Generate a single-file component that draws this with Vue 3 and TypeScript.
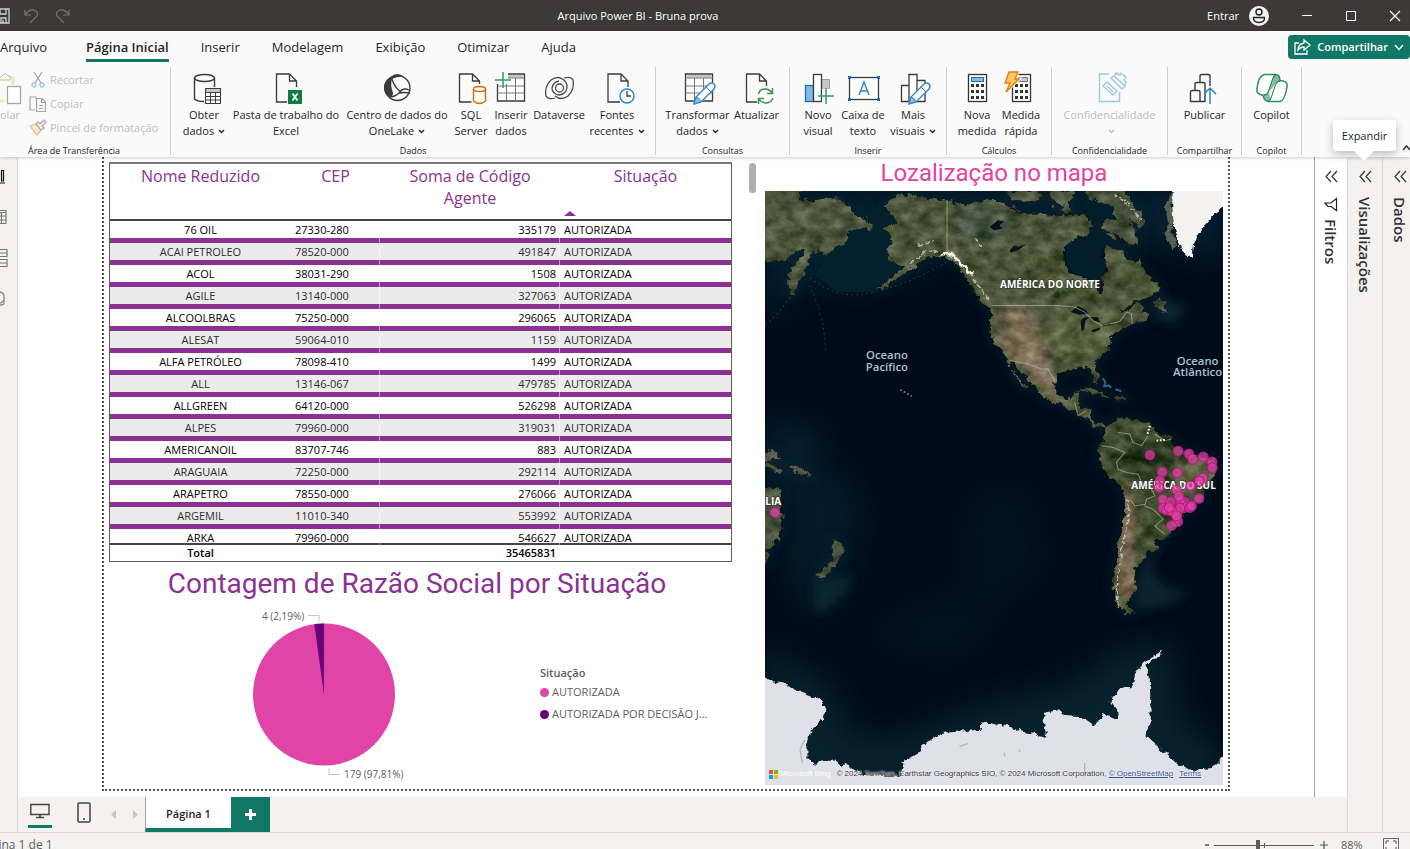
<script setup lang="ts">
import { ref } from 'vue'

interface RibbonButton { icon: string; lines: string[]; width: number; menu?: boolean; disabled?: boolean }
interface RibbonGroup { label: string; width: number; buttons: RibbonButton[] }

const tabs = ['Arquivo', 'Página Inicial', 'Inserir', 'Modelagem', 'Exibição', 'Otimizar', 'Ajuda']
const activeTab = ref('Página Inicial')
const zoom = ref(44)

const doc = (x: number) =>
  `<path d="M${x + 12} 29H${x}V1H${x + 13}L${x + 20} 8V14M${x + 13} 1V8H${x + 20}" fill="none" stroke="#3b3a39" stroke-width="1.3"/>`
const pencil =
  '<path d="M12 31 14 24 27 11Q30 9 32 11Q34 13 32 16L19 29Z" fill="#fff" stroke="#2e86c9" stroke-width="1.4"/><path d="M12 31 14 24Q18 25 19 29Z" fill="#83bbe8" stroke="#2e86c9"/><path d="M24 14 29 19" stroke="#2e86c9"/>'
const keys = (x: number) => {
  let out = ''
  for (let r = 0; r < 3; r++) for (let c = 0; c < 3; c++) out += `<rect x="${x + c * 5}" y="${11 + r * 6}" width="3" height="3" fill="#333"/>`
  return out
}
const plus = (x: number, y: number) => `<path d="M${x - 8} ${y}H${x + 8}M${x} ${y - 8}V${y + 8}" stroke="#2f9e57" stroke-width="1.5"/>`
const cylinder = (x: number, y: number, w: number, h: number, c: string) =>
  `<path d="M${x} ${y}V${y + h}Q${x + w / 2} ${y + h + 5} ${x + w} ${y + h}V${y}" fill="#fff" stroke="${c}" stroke-width="1.4"/><ellipse cx="${x + w / 2}" cy="${y}" rx="${w / 2}" ry="2.5" fill="#fff" stroke="${c}" stroke-width="1.4"/>`
const grid = (x: number) =>
  `<path d="M${x} 1H${x + 27}V28H${x}Z" fill="#fff" stroke="#3b3a39" stroke-width="1.3"/><rect x="${x + 1}" y="2" width="25" height="3" fill="#c8c6c4"/><path d="M${x} 5H${x + 27}M${x} 13H${x + 27}M${x} 20H${x + 27}M${x + 9} 5V28M${x + 18} 5V28" stroke="#797775" fill="none"/>`

const icons: Record<string, string> = {
  database:
    '<path d="M6.500 5V26Q9 28.500 16 28.500M26.500 5V14" fill="none" stroke="#3b3a39" stroke-width="1.400"/><ellipse cx="16.500" cy="5" rx="10" ry="3.500" fill="none" stroke="#3b3a39" stroke-width="1.400"/><rect x="17.500" y="15.500" width="15" height="15" fill="#fff" stroke="#3b3a39"/><rect x="18" y="16" width="14" height="3" fill="#c8c6c4"/><path d="M17.500 19.500H32.500M17.500 23.500H32.500M17.500 27H32.500M22.500 19.500V30M27.500 19.500V30" stroke="#3b3a39"/>',
  excel:
    doc(6.5) +
    '<rect x="17" y="16" width="16" height="16" fill="#fafafa"/><rect x="18" y="17" width="14" height="14" fill="#107c41"/><path d="M22.500 20.500 27.500 27.500M27.500 20.500 22.500 27.500" stroke="#fff" stroke-width="1.800"/>',
  onelake:
    '<circle cx="16.500" cy="15" r="12.500" fill="#fafafa" stroke="#3b3a39" stroke-width="1.400"/><path d="M10 4Q16-2 23 4Q17 3 11 6Q9 12 12 20Q12 24 8 24Q2 20 3 12Q5 6 10 4Z" fill="#3b3a39"/><path d="M11 6Q13 14 20 19M8 24Q14 24 18 20Q22 14 28 17M18 20Q22 19 29 20" fill="none" stroke="#3b3a39" stroke-width="1.300"/>',
  sql: doc(4.5) + '<rect x="17" y="11" width="15" height="20" fill="#fafafa"/>' + cylinder(18.5, 16, 12, 12, '#d86b00'),
  enter: grid(2.5) + '<rect x="-1" y="-2" width="14" height="13" fill="#fafafa"/>' + plus(8, 7),
  dataverse:
    '<g fill="none" stroke="#4a4a48" stroke-width="1.300"><circle cx="16.500" cy="15" r="4"/><path d="M12 25Q5 27 3 23Q1 14 8 7Q15 2 21 7Q26 12 23 18Q20 22 15 22Q9 20 9 15Q10 9 16 8M21 5Q28 3 30 7Q32 16 25 23Q18 28 12 23"/></g>',
  recent:
    doc(7) + '<circle cx="26" cy="23" r="9" fill="#fafafa"/><circle cx="26" cy="23" r="7" fill="#fff" stroke="#2e86c9" stroke-width="1.500"/><path d="M26 18V23H30" fill="none" stroke="#3b3a39" stroke-width="1.300"/>',
  transform: grid(3.5) + '<g>' + pencil + '</g>',
  refresh:
    doc(5.5) +
    '<rect x="16" y="13" width="17" height="18" fill="#fafafa"/><path d="M17.500 21Q19 15.500 25 16Q29 16.500 31 20M31.500 15V20.500H26M32 25Q30 30 24.500 30Q20 29.500 18 26M17.500 31V25.500H23" fill="none" stroke="#3a9350" stroke-width="1.500"/>',
  visual:
    '<rect x="3.500" y="12.500" width="8" height="16" fill="#83bbe8" stroke="#1f6fb2" stroke-width="1.300"/><rect x="19.500" y="6.500" width="8" height="22" fill="#c8c6c4" stroke="#a19f9d"/><rect x="11.500" y="1.500" width="8" height="27" fill="#fff" stroke="#3b3a39" stroke-width="1.300"/><rect x="20" y="16" width="10" height="14" fill="#fafafa"/>' +
    plus(24, 23),
  textbox:
    '<rect x="2.500" y="4.500" width="29" height="22" fill="#fff" stroke="#3b3a39" stroke-width="1.300"/><path d="M1 3H4V6H1ZM30 3H33V6H30ZM1 25H4V28H1ZM30 25H33V28H30Z" fill="#0f78c4"/><path d="M12 22 17 9 22 22M14 18H20" fill="none" stroke="#2e86c9" stroke-width="1.500"/>',
  more:
    '<path d="M4.500 28.500V12.500H12V1.500H20V7.500H28V28.500ZM12 12V28M20 7V18" fill="#fff" stroke="#3b3a39" stroke-width="1.300"/>' + pencil,
  calc: '<rect x="7.500" y="1.500" width="18" height="27" fill="#fff" stroke="#333" stroke-width="1.300"/><rect x="10.500" y="4.500" width="12" height="4" fill="#83bbe8" stroke="#1f6fb2"/>' + keys(10),
  quick:
    '<rect x="7.500" y="1.500" width="18" height="27" fill="#fff" stroke="#333" stroke-width="1.300"/><rect x="12.500" y="4.500" width="10" height="4" fill="#c8c6c4" stroke="#797775"/>' +
    keys(10) +
    '<path d="M4-1H13L10 6H14L1 19 5 10H0Z" fill="#fcd34f" stroke="#fafafa" stroke-width="3"/><path d="M4-1H13L10 6H14L1 19 5 10H0Z" fill="#fbc75d" stroke="#e07b1a" stroke-width="1.300"/>',
  label:
    '<g fill="none" stroke="#9dc9e6" stroke-width="1.400"><path d="M15 1H5.500V28.500H25.500V19"/><path d="M9 13 13 9 23 18 19 22ZM13 13 19 19" /><path d="M17 5 20 3 31 13 28 16ZM20 3 22 0 26 2 27 0 32 4 30 7 32 9 31 13M22 5 29 11"/></g>',
  publish:
    '<g fill="none" stroke="#3b3a39" stroke-width="1.400"><path d="M1.500 28.500V19Q1.500 17.500 3 17.500H9Q11 17.500 11 19V28.500ZM6 17V11Q6 9.500 8 9.500H14Q16 9.500 16 11V28.500H11M11 9V3Q11 1.500 13 1.500H19Q21 1.500 21 3V13"/></g><path d="M21 31V15M15 21 21 15 27 21" fill="none" stroke="#2e86c9" stroke-width="1.500"/>',
  copilot:
    '<path d="M16 7Q18 1 21 1.500Q24 2 24 8L20 10 13 19Q15 28 12 28.500Q8 28 7 22Z" fill="#85bf9f"/><path d="M8 1.500H20Q17 3 15 10L12 19Q10 23 6 22Q0 21 1 16Q2 4 8 1.500ZM24 28.500H12Q15 27 17 20L20 11Q22 7 27 8Q32 9 31 14Q29 27 24 28.500ZM20 1.500Q24 2 24 8M12 28.500Q8 28 7 22" fill="none" stroke="#2f8f5b" stroke-width="1.500"/><path d="M8 3H17L12 18Q10 22 6 21Q2 20 2 16Q4 4 8 3ZM24 27H15L20 12Q22 8 27 9Q31 10 30 14Q28 26 24 27Z" fill="#fdfffe"/>',
}

const groups: RibbonGroup[] = [
  {
    label: 'Dados', width: 485,
    buttons: [
      { icon: 'database', lines: ['Obter', 'dados'], width: 52, menu: true },
      { icon: 'excel', lines: ['Pasta de trabalho do', 'Excel'], width: 112 },
      { icon: 'onelake', lines: ['Centro de dados do', 'OneLake'], width: 110, menu: true },
      { icon: 'sql', lines: ['SQL', 'Server'], width: 38 },
      { icon: 'enter', lines: ['Inserir', 'dados'], width: 42 },
      { icon: 'dataverse', lines: ['Dataverse'], width: 54 },
      { icon: 'recent', lines: ['Fontes', 'recentes'], width: 62, menu: true },
    ],
  },
  {
    label: 'Consultas', width: 134,
    buttons: [
      { icon: 'transform', lines: ['Transformar', 'dados'], width: 68, menu: true },
      { icon: 'refresh', lines: ['Atualizar'], width: 50 },
    ],
  },
  {
    label: 'Inserir', width: 157,
    buttons: [
      { icon: 'visual', lines: ['Novo', 'visual'], width: 40 },
      { icon: 'textbox', lines: ['Caixa de', 'texto'], width: 50 },
      { icon: 'more', lines: ['Mais', 'visuais'], width: 50, menu: true },
    ],
  },
  {
    label: 'Cálculos', width: 105,
    buttons: [
      { icon: 'calc', lines: ['Nova', 'medida'], width: 44 },
      { icon: 'quick', lines: ['Medida', 'rápida'], width: 44 },
    ],
  },
  { label: 'Confidencialidade', width: 116, buttons: [{ icon: 'label', lines: ['Confidencialidade', ''], width: 100, menu: true, disabled: true }] },
  { label: 'Compartilhar', width: 74, buttons: [{ icon: 'publish', lines: ['Publicar'], width: 60 }] },
  { label: 'Copilot', width: 60, buttons: [{ icon: 'copilot', lines: ['Copilot'], width: 50 }] },
]

const rows: [string, string, string][] = [
  ['76 OIL', '27330-280', '335179'],
  ['ACAI PETROLEO', '78520-000', '491847'],
  ['ACOL', '38031-290', '1508'],
  ['AGILE', '13140-000', '327063'],
  ['ALCOOLBRAS', '75250-000', '296065'],
  ['ALESAT', '59064-010', '1159'],
  ['ALFA PETRÓLEO', '78098-410', '1499'],
  ['ALL', '13146-067', '479785'],
  ['ALLGREEN', '64120-000', '526298'],
  ['ALPES', '79960-000', '319031'],
  ['AMERICANOIL', '83707-746', '883'],
  ['ARAGUAIA', '72250-000', '292114'],
  ['ARAPETRO', '78550-000', '276066'],
  ['ARGEMIL', '11010-340', '553992'],
  ['ARKA', '79960-000', '546627'],
]

const pins: [number, number][] = [
  [33, 980], [1155, 808], [1240, 796], [1272, 804], [1283, 820], [1315, 813], [1341, 828], [1342, 846], [1192, 859], [1237, 861],
  [1185, 885], [1277, 901], [1302, 938], [1194, 941], [1218, 948], [1258, 948], [1247, 945], [1195, 967], [1265, 963], [1275, 965],
  [1205, 973], [1229, 980], [1245, 967], [1239, 1007], [1220, 1019], [1314, 877], [1303, 886], [1183, 905], [1235, 912], [1242, 932],
  [1280, 960], [1220, 975], [1213, 965], [1235, 990],
]

const northAmerica =
  'M360 65 400 25 455 28 510 42 550 45 600 60 640 45 680 45 720 55 760 85 830 85 880 90 920 95 960 85 985 120 965 150 930 155 900 190 895 220 915 265 960 275 985 285 1005 325 1015 300 1008 275 1030 255 1018 215 1020 180 1060 185 1080 200 1090 225 1110 235 1125 220 1140 255 1165 285 1188 310 1175 325 1150 335 1120 350 1090 362 1065 380 1085 375 1120 355 1140 360 1130 375 1150 390 1145 405 1110 415 1060 440 1040 455 1035 490 1000 520 985 535 1000 565 1003 590 990 585 975 550 950 545 925 550 880 565 872 590 875 620 890 640 915 640 930 620 950 620 940 655 950 665 980 672 978 700 1000 715 1028 718 1020 730 985 720 960 695 930 675 880 655 830 635 815 605 775 570 745 530 735 538 750 560 785 602 775 605 745 560 725 515 700 490 678 450 675 405 680 370 650 350 625 310 600 270 575 235 540 215 505 215 470 230 440 250 380 292 330 320 420 245 400 235 370 215 365 190 385 170 370 150 358 125 395 115 380 90Z'
const southAmerica =
  'M1025 725 1060 695 1090 700 1140 705 1160 720 1180 745 1215 750 1228 780 1270 800 1310 810 1345 825 1358 850 1340 880 1320 910 1310 940 1290 965 1255 985 1245 1015 1220 1035 1205 1060 1175 1060 1180 1085 1165 1095 1140 1105 1135 1125 1112 1150 1108 1180 1112 1210 1095 1235 1090 1260 1112 1278 1085 1282 1060 1260 1045 1230 1042 1180 1055 1130 1062 1060 1080 980 1080 930 1060 895 1030 870 1003 820 1000 790 1015 765Z'
const siberia =
  'M-30-20 100-20 108 40 150 45 190 38 230 40 255 65 290 95 328 115 318 140 290 130 268 128 252 145 245 175 215 185 190 210 160 200 138 205 130 250 105 290 90 330 78 330 75 290 80 255 100 225 125 195 100 195 85 210 65 225 30 225-30 222Z'
const islands =
  'M725 17 820 17 840 40 800 48 770 50 740 42ZM740 60 775 55 790 75 760 82ZM850 17 930 17 925 45 895 60 865 45ZM810 58 850 52 865 72 830 80ZM885 70 905 55 925 75 905 88ZM960 10 1075 10 1110 60 1142 105 1120 125 1092 100 1118 150 1122 180 1095 178 1060 150 1010 132 1018 105 1055 100 1045 65 1000 45 970 40ZM1015 140 1045 145 1050 175 1025 165ZM1170 345 1188 335 1208 380 1185 378 1168 370ZM945 615 985 605 1035 632 1000 628 970 620ZM1050 630 1090 635 1085 645 1055 645ZM205 1060 243 1088 225 1125 190 1165 175 1175 155 1170 205 1115ZM-30 895 45 905 58 1010 40 1060 15 1090-30 1095ZM-30 790 40 800 50 820-30 828ZM60 835 110 850 155 872 130 870 85 855ZM3 825 60 855 40 860 3 840ZM-30 1105 14 1105 8 1140-30 1140Z'
const hudsonBay = 'M905 185 925 160 965 160 985 125 1000 150 1018 175 1012 215 1028 250 1000 280 975 280 935 268 908 240Z'
const arcticChannels = 'M960 55 1000 60 1040 75 1035 95 1005 95 985 125 970 90ZM990 125 1020 138 1050 165 1085 190 1105 225 1090 220 1070 195 1020 175 1000 155ZM740 50 810 52 850 45 870 75 830 85 770 82Z'
const antarctica =
  'M-30 1440 30 1490 60 1495 110 1515 160 1535 187 1568 178 1600 150 1620 130 1660 130 1710 150 1738 165 1725 210 1722 260 1745 300 1765 410 1765 420 1720 465 1700 470 1680 530 1640 650 1630 655 1608 730 1620 780 1635 845 1655 835 1580 880 1572 895 1585 950 1590 990 1618 1015 1582 1055 1600 1062 1580 1040 1550 1045 1525 1075 1505 1100 1510 1110 1470 1130 1430 1190 1395 1180 1410 1145 1435 1155 1480 1158 1600 1145 1650 1200 1700 1240 1735 1290 1750 1340 1745 1410 1680 1410 1860-30 1860Z'
const greenland = 'M1225-20 1410-20 1410 50 1345 90 1310 130 1285 170 1280 215 1262 210 1240 180 1228 130 1222 70Z'
</script>

<template>
  <div class="app">
    <header class="titlebar">
      <div class="quick">
        <button aria-label="Salvar"><svg width="14" height="16" viewBox="0 0 14 16"><path d="M-1 1H9V15H-1M0 1V6H6V1M1 15V10H6V15M3 12V15" fill="none" stroke="#d0d0d0" stroke-width="1.3" /></svg></button>
        <button aria-label="Desfazer"><svg width="16" height="16" viewBox="0 0 16 16"><path d="M1 2V7H7M1 7Q5 1 10 2Q15 4 13 8L6 15" fill="none" stroke="#767574" stroke-width="1.2" /></svg></button>
        <button aria-label="Refazer"><svg width="16" height="16" viewBox="0 0 16 16"><path d="M15 2V7H9M15 7Q11 1 6 2Q1 4 3 8L10 15" fill="none" stroke="#767574" stroke-width="1.2" /></svg></button>
      </div>
      <h1>Arquivo Power BI - Bruna prova</h1>
      <div class="window">
        <button class="signin">Entrar
          <svg width="20" height="20" viewBox="0 0 20 20"><circle cx="10" cy="10" r="10" fill="#f3f2f1" /><circle cx="10" cy="6" r="3" fill="none" stroke="#222" stroke-width="1.4" /><path d="M4.500 11.500H15.500Q16 16 10 16.500Q4 16 4.500 11.500Z" fill="none" stroke="#222" stroke-width="1.4" /></svg>
        </button>
        <button aria-label="Minimizar"><svg width="12" height="12" viewBox="0 0 12 12"><path d="M1 5.500H11" stroke="#fff" /></svg></button>
        <button aria-label="Maximizar"><svg width="12" height="12" viewBox="0 0 12 12"><path d="M1.500 1.500H10.500V10.500H1.500Z" fill="none" stroke="#fff" /></svg></button>
        <button aria-label="Fechar"><svg width="12" height="12" viewBox="0 0 12 12"><path d="M1 1 11 11M11 1 1 11" stroke="#fff" stroke-width="1.2" /></svg></button>
      </div>
    </header>

    <section class="ribbon">
      <nav class="tabs">
        <button v-for="t in tabs" :key="t" :class="{ active: t === activeTab }" @click="activeTab = t">{{ t }}</button>
        <button class="share">
          <svg width="17" height="16" viewBox="0 0 17 16"><path d="M5 4H1V15H13V11M10 1 16 6 10 11V8Q6 8 4 11Q4 5 10 4Z" fill="none" stroke="#fff" stroke-width="1.3" /></svg>
          <span>Compartilhar</span>
          <svg width="10" height="7" viewBox="0 0 10 7"><path d="M1 1 5 5.500 9 1" fill="none" stroke="#fff" stroke-width="1.3" /></svg>
        </button>
      </nav>
      <div class="groups">
        <div class="group clipboard">
          <div class="clip-body">
            <button class="paste" disabled>
              <svg width="24" height="32" viewBox="0 0 24 32"><path d="M0 5H15V12M0 28H6" fill="none" stroke="#fbe0b8" stroke-width="3" /><path d="M0 4Q3 5 5 2Q8-1 10 3H12V7H0" fill="#fafafa" stroke="#bdbbb9" /><rect x="9.500" y="13.500" width="13" height="17" fill="#fff" stroke="#a9a7a5" stroke-width="1.300" /></svg>
              <span>Colar</span>
            </button>
            <div class="clip-list">
              <button disabled><svg width="16" height="16" viewBox="0 0 16 16"><path d="M4 0 11 11M12 0 5 11" stroke="#a9a7a5" stroke-width="1.3" /><circle cx="4" cy="13" r="2" fill="none" stroke="#9dc9e6" stroke-width="1.3" /><circle cx="12" cy="13" r="2" fill="none" stroke="#9dc9e6" stroke-width="1.3" /></svg>Recortar</button>
              <button disabled><svg width="16" height="16" viewBox="0 0 16 16"><path d="M5 14H0V1H6V3M6.500 2.500H12L15.500 6V15.500H6.500ZM11.500 3V6.500H15M9 9.500H13M9 12.500H13" fill="none" stroke="#a9a7a5" stroke-width="1.2" /></svg>Copiar</button>
              <button disabled><svg width="16" height="16" viewBox="0 0 16 16"><path d="M0 6 6 4 11 10 7 15Z" fill="#fbe9cf" stroke="#e9b98b" stroke-width="1.2" /><path d="M6 4 8 2 10 4 14 0 16 2 12 6 14 8 11 10Z" fill="#fafafa" stroke="#a9a7a5" stroke-width="1.2" /></svg>Pincel de formatação</button>
            </div>
          </div>
          <div class="group-label">Área de Transferência</div>
        </div>
        <div v-for="g in groups" :key="g.label" class="group" :style="{ width: g.width + 'px' }">
          <div class="group-body">
            <button v-for="b in g.buttons" :key="b.icon" class="rb" :disabled="b.disabled" :style="{ width: b.width + 'px' }">
              <svg class="ico" width="32" height="32" viewBox="0 0 32 32" v-html="icons[b.icon]"></svg>
              <span v-for="(l, i) in b.lines" :key="i" class="line">{{ l }}<svg v-if="b.menu && i === 1" class="caret" width="7" height="5" viewBox="0 0 7 5"><path d="M1 1 3.500 3.500 6 1" fill="none" stroke="currentColor" stroke-width="1.4" /></svg></span>
            </button>
          </div>
          <div class="group-label">{{ g.label }}</div>
        </div>
        <button class="collapse" aria-label="Recolher faixa"><svg width="8" height="6" viewBox="0 0 8 6"><path d="M1 5 4.500 1 8 5" fill="none" stroke="#333" stroke-width="1.6" /></svg></button>
      </div>
    </section>

    <main class="main">
      <aside class="rail">
        <button aria-label="Relatório"><svg width="8" height="16" viewBox="0 0 8 16"><path d="M1.500 2.500H3.500V13H1.500ZM0 15H5" fill="none" stroke="#111" stroke-width="1.2" /></svg></button>
        <button aria-label="Tabela"><svg width="8" height="16" viewBox="0 0 8 16"><path d="M0 1.500H6V14.500H0M0 3.500H6M0 7H6M0 11H6M1.500 3V14" fill="none" stroke="#777" stroke-width="1.2" /></svg></button>
        <button aria-label="Modelo"><svg width="8" height="18" viewBox="0 0 8 18"><path d="M0 .500H7V7.500H0M0 4H7M0 10.500H7V17.500H0M0 14H7" fill="none" stroke="#777" stroke-width="1.2" /></svg></button>
        <button aria-label="Consulta"><svg width="8" height="16" viewBox="0 0 8 16"><path d="M0 1Q4 2 4 5Q5 11 0 12M4 5V12Q4 14 0 14" fill="none" stroke="#888" stroke-width="1.3" /></svg></button>
      </aside>

      <div class="workspace">
        <div class="upper">
          <div class="canvas">
            <div class="page">
              <div class="left-col">
                <div class="table-wrap">
                  <table>
                    <colgroup><col class="c1" /><col class="c2" /><col class="c3" /><col class="c4" /></colgroup>
                    <thead>
                      <tr><th>Nome Reduzido</th><th>CEP</th><th>Soma de Código Agente</th><th>Situação<span class="sort"></span></th></tr>
                    </thead>
                    <tbody>
                      <tr v-for="r in rows" :key="r[0]">
                        <td><div>{{ r[0] }}</div></td>
                        <td><div>{{ r[1] }}</div></td>
                        <td><div>{{ r[2] }}</div></td>
                        <td><div>AUTORIZADA</div></td>
                      </tr>
                    </tbody>
                    <tfoot><tr><td>Total</td><td></td><td>35465831</td><td></td></tr></tfoot>
                  </table>
                  <div class="thumb"></div>
                </div>
                <h2 class="pie-title">Contagem de Razão Social por Situação</h2>
                <div class="pie">
                  <svg width="420" height="180" viewBox="109 605 420 180">
                    <circle cx="324" cy="694.500" r="71" fill="#e044a7" />
                    <path d="M324 694.500V623.500A71 71 0 0 0 314.300 624.200Z" fill="#6b007b" />
                    <path d="M308 615.500H319V622M329 768V774.500H340" fill="none" stroke="#c8c6c4" />
                    <text x="262" y="620">4 (2,19%)</text>
                    <text x="344" y="778">179 (97,81%)</text>
                  </svg>
                  <ul class="legend">
                    <li class="legend-title">Situação</li>
                    <li><i class="pink"></i>AUTORIZADA</li>
                    <li><i class="violet"></i>AUTORIZADA POR DECISÃO J...</li>
                  </ul>
                </div>
              </div>

              <div class="right-col">
                <h2 class="map-title">Lozalização no mapa</h2>
                <div class="map">
                  <svg viewBox="3 17 1371 1779" preserveAspectRatio="xMidYMid slice">
                    <defs>
                      <filter id="land" x="-40" y="-40" width="1460" height="1900" filterUnits="userSpaceOnUse" color-interpolation-filters="sRGB">
                        <feTurbulence type="fractalNoise" baseFrequency="0.05" numOctaves="4" seed="7" result="coast" />
                        <feDisplacementMap in="SourceGraphic" in2="coast" scale="26" xChannelSelector="R" yChannelSelector="G" result="shape" />
                        <feTurbulence type="fractalNoise" baseFrequency="0.022 0.03" numOctaves="6" seed="21" />
                        <feColorMatrix values="1 0 0 0 0  .92 .06 0 0 0  .9 0 .05 0 0  0 0 0 0 1" result="tone" />
                        <feComposite in="shape" in2="tone" operator="arithmetic" k1="0" k2="1" k3="0.42" k4="-0.23" result="mix" />
                        <feComposite in="mix" in2="shape" operator="in" />
                      </filter>
                      <filter id="ice" x="-40" y="-40" width="1460" height="1920" filterUnits="userSpaceOnUse" color-interpolation-filters="sRGB">
                        <feTurbulence type="fractalNoise" baseFrequency="0.05" numOctaves="3" seed="4" result="n" />
                        <feDisplacementMap in="SourceGraphic" in2="n" scale="22" xChannelSelector="R" yChannelSelector="G" />
                      </filter>
                      <filter id="soft" x="-200" y="-200" width="1800" height="2200" filterUnits="userSpaceOnUse"><feGaussianBlur stdDeviation="16" /></filter>
                      <filter id="softer" x="-300" y="-300" width="2000" height="2400" filterUnits="userSpaceOnUse" color-interpolation-filters="sRGB"><feGaussianBlur stdDeviation="50" /></filter>
                      <clipPath id="landclip"><path :d="northAmerica" /><path :d="southAmerica" /><path :d="siberia" /><path :d="islands" /></clipPath>
                    </defs>
                    <rect width="1380" height="1800" fill="#010b19" />
                    <g filter="url(#softer)">
                      <path d="M0 0H1380V220L1150 170 900 120 600 140 560 200 330 300 150 280 0 400Z" fill="#04202f" />
                      <path d="M0 1380 200 1500 260 1650 420 1650 640 1560 900 1500 1090 1380 1230 1380 1240 1600 1380 1700V1900H0Z" fill="#07222d" />
                      <path d="M60 880 260 860 290 1000 230 1250 140 1290 60 1160Z" fill="#031a29" />
                      <path d="M620 930 780 900 840 1150 600 1300ZM300 1350 520 1230 700 1300 560 1420Z" fill="#021423" />
                      <path d="M0 700 180 740 150 900 0 900Z" fill="#052030" />
                    </g>
                    <g filter="url(#soft)" fill="none" stroke="#08242f" stroke-width="20" opacity=".7">
                      <path :d="northAmerica" /><path :d="southAmerica" /><path :d="islands" /><path :d="siberia" />
                    </g>
                    <g filter="url(#soft)" fill="#0a2935" opacity=".8">
                      <path d="M1185 1075 1130 1140 1105 1250 1130 1275 1200 1260 1280 1220 1200 1200 1160 1150ZM150 1180 260 1170 260 1200 190 1270 150 1280ZM1180 340 1270 360 1230 420 1170 400Z" />
                    </g>
                    <path d="M270 90 360 60 380 130 360 190 390 240 430 250 330 320 220 320 150 270 200 210 260 150Z" fill="#04202c" />
                    <path d="M560 222Q450 290 330 320 220 350 130 270M78 335Q45 385 3 418M135 300Q180 380 185 500" fill="none" stroke="#8ea6a0" stroke-width="3" stroke-dasharray="6 9" opacity=".25" />
                    <g filter="url(#land)">
                      <path :d="siberia" fill="#545c45" />
                      <path :d="northAmerica" fill="#535c42" />
                      <path :d="southAmerica" fill="#455236" />
                      <path :d="islands" fill="#4f5844" />
                      <g clip-path="url(#landclip)">
                        <g filter="url(#soft)">
                          <path d="M680 370 800 370 840 480 860 560 920 640 860 630 780 560 700 480Z" fill="#857660" />
                          <path d="M680 380 720 370 740 450 700 480Z" fill="#5b6144" />
                          <path d="M760 180 900 200 900 300 1000 330 1180 300 1060 200 1040 350 880 350 800 300Z" fill="#4a5637" />
                          <path d="M850 380 1060 380 1010 510 870 520Z" fill="#5a6644" />
                          <path d="M1040 770 1210 760 1280 830 1170 890 1060 860Z" fill="#2d4128" />
                          <path d="M1060 880 1110 930 1110 1240 1050 1240 1065 1000Z" fill="#86735f" />
                          <path d="M1230 830 1340 830 1310 920 1230 900Z" fill="#656a4c" />
                          <path d="M580 50 760 90 700 180 580 150Z" fill="#4c5b4c" />
                        </g>
                      </g>
                    </g>
                    <g filter="url(#ice)">
                      <path :d="hudsonBay" fill="#031d2c" />
                      <path :d="arcticChannels" fill="#031d2c" />
                      <path :d="antarctica" fill="#e0e0e8" />
                      <path d="M1222 30 1208 65 1220 100 1208 140 1230 185" fill="none" stroke="#5a6050" stroke-width="16" />
                      <path :d="greenland" fill="#f3f2ee" />
                      <path d="M440 235 480 200 510 195 560 215 600 240 630 285 670 340M460 180 510 170M1050 25 1080 50 1105 75 1125 105M630 160 655 180M1085 940 1090 1000 1070 1100 1055 1200 1060 1260" fill="none" stroke="#e2e2dc" stroke-width="5" stroke-dasharray="14 7" opacity=".7" />
                      <path d="M530 208Q560 195 570 215L620 265" fill="none" stroke="#f0f0ed" stroke-width="9" />
                    </g>
                    <g fill="#05121a">
                      <path d="M675 125 700 105 720 108 705 120 715 130 690 135ZM735 195 750 180 760 185 785 175 765 192 740 202Z" />
                      <path d="M918 380 940 362 965 375 970 385 945 388ZM950 435 948 405 960 395 975 395 962 405 958 435ZM975 395 1000 395 1005 410 985 405ZM980 435 1005 425 1005 433 985 440ZM1010 417 1038 412 1038 418 1015 422Z" />
                      <path d="M860 335 880 310 888 340 870 335Z" opacity=".4" />
                    </g>
                    <g fill="none" stroke="#c8ccbc" stroke-width="3" opacity=".55">
                      <path d="M548 45V195M682 360H882L930 365 960 380 985 405 1010 420 1065 408 1085 380 1100 385 1102 415M735 525 790 535 830 550 850 550 870 585" />
                      <path d="M1060 740 1095 745 1105 770 1130 780 1150 750M1010 780 1045 785 1080 800 1055 830 1060 850 1085 860 1120 865 1130 890 1155 900 1170 930 1145 940 1140 960 1165 970 1195 1000 1170 1020 1200 1045M1170 745 1200 765 1220 760M930 650 940 690 965 675M1095 940 1110 960 1140 955" />
                    </g>
                    <path d="M1155 720 1148 745M1175 765 1200 762" stroke="#fff" stroke-width="6" stroke-dasharray="5 5" />
                    <path d="M1014 578 1022 590 1018 602 1032 600 1040 606M1052 611 1070 617" fill="none" stroke="#2f85b0" stroke-width="6" opacity=".75" />
                    <path d="M408 612 425 622 442 632" fill="none" stroke="#8a8c7c" stroke-width="5" stroke-dasharray="5 7" />
                    <path d="M115 1730 108 1690 122 1660M960 1730V1770M585 1680 610 1672M720 1700V1710M765 1690V1697" stroke="#8b8a92" stroke-width="4" fill="none" opacity=".5" />
                    <g class="map-labels">
                      <text x="856" y="308" text-anchor="middle">AMÉRICA DO NORTE</text>
                      <text x="1226" y="909" text-anchor="middle">AMÉRICA DO SUL</text>
                      <text x="4" y="956">LIA</text>
                    </g>
                    <g class="ocean" text-anchor="middle">
                      <text x="368" y="521">Oceano</text><text x="368" y="555">Pacífico</text>
                      <text x="1298" y="537">Oceano</text><text x="1298" y="571">Atlântico</text>
                    </g>
                    <circle v-for="(p, i) in pins" :key="i" :cx="p[0]" :cy="p[1]" r="14.500" fill="#e044a7" fill-opacity=".7" stroke="#c4158a" stroke-width="3" />
                  </svg>
                  <div class="map-foot">
                    <svg width="9" height="9" viewBox="0 0 9 9"><path d="M0 0H4V4H0Z" fill="#f25022" /><path d="M5 0H9V4H5Z" fill="#7fba00" /><path d="M0 5H4V9H0Z" fill="#00a4ef" /><path d="M5 5H9V9H5Z" fill="#ffb900" /></svg>
                    <span class="bing">Microsoft Bing</span>
                    <span class="credit">© 2024 TomTom, Earthstar Geographics SIO, © 2024 Microsoft Corporation, <a href="#osm">© OpenStreetMap</a><a href="#terms">Terms</a></span>
                  </div>
                </div>
              </div>
            </div>
          </div>
          <aside class="pane filters">
            <button aria-label="Expandir filtros"><svg width="13" height="13" viewBox="0 0 13 13"><path d="M6 1 1 6.500 6 12M12 1 7 6.500 12 12" fill="none" stroke="#333" stroke-width="1.200" /></svg></button>
            <svg width="12" height="13" viewBox="0 0 12 13"><path d="M11.500 .500V12.500L6 8.500H3L0 5H6Z" fill="none" stroke="#222" stroke-width="1.200" /></svg>
            <span>Filtros</span>
          </aside>
        </div>
        <div class="pagebar">
          <button class="view on" aria-label="Computador"><svg width="20" height="16" viewBox="0 0 20 16"><path d="M.800 1.500H19V11.500H.800ZM10 12V14.500M6 14.500H14" fill="none" stroke="#444" stroke-width="1.400" /></svg></button>
          <button class="view" aria-label="Celular"><svg width="14" height="21" viewBox="0 0 14 21"><rect x="1" y="1" width="12" height="19" rx="1" fill="none" stroke="#444" stroke-width="1.500" /><path d="M6 17H8" stroke="#444" stroke-width="1.500" /></svg></button>
          <button class="step" aria-label="Anterior"><svg width="5" height="9" viewBox="0 0 5 9"><path d="M5 0V9L0 4.500Z" fill="#c8c6c4" /></svg></button>
          <button class="step" aria-label="Próxima"><svg width="5" height="9" viewBox="0 0 5 9"><path d="M0 0V9L5 4.500Z" fill="#c8c6c4" /></svg></button>
          <button class="tab">Página 1</button>
          <button class="add" aria-label="Nova página"><svg width="11" height="11" viewBox="0 0 11 11"><path d="M5.500 0V11M0 5.500H11" stroke="#fff" stroke-width="3" /></svg></button>
        </div>
      </div>

      <aside class="pane visuals">
        <button aria-label="Expandir visualizações"><svg width="13" height="13" viewBox="0 0 13 13"><path d="M6 1 1 6.500 6 12M12 1 7 6.500 12 12" fill="none" stroke="#333" stroke-width="1.200" /></svg></button>
        <span>Visualizações</span>
        <div class="tip" role="tooltip">Expandir</div>
      </aside>
      <aside class="pane data">
        <button aria-label="Expandir dados"><svg width="13" height="13" viewBox="0 0 13 13"><path d="M6 1 1 6.500 6 12M12 1 7 6.500 12 12" fill="none" stroke="#333" stroke-width="1.200" /></svg></button>
        <span>Dados</span>
      </aside>
    </main>

    <footer class="status">
      <span class="pageno">Página 1 de 1</span>
      <div class="zoom">
        <button aria-label="Reduzir"><svg width="6" height="10" viewBox="0 0 6 10"><path d="M1 5H5" stroke="#555" stroke-width="1.500" /></svg></button>
        <input v-model="zoom" type="range" min="0" max="100" aria-label="Zoom" />
        <button aria-label="Ampliar"><svg width="8" height="10" viewBox="0 0 8 10"><path d="M0 5H8M4 1V9" stroke="#555" stroke-width="1.200" /></svg></button>
        <span class="pct">88%</span>
        <button aria-label="Ajustar à página"><svg width="16" height="14" viewBox="0 0 16 14"><path d="M.500.500H15.500V14M.500.500V14" fill="none" stroke="#6a5a86" /><path d="M3 6V3H6M10 3H13V6M3 9V12H6M13 9V12H10" fill="none" stroke="#555" /></svg></button>
      </div>
    </footer>
  </div>
</template>

<style>
html, body { margin: 0; overflow: hidden; }
</style>

<style scoped>
* { box-sizing: border-box; }
.app { display: flex; flex-direction: column; height: 100vh; overflow: hidden; background: #f3f2f1; color: #252423; font: 11px/16px "Open Sans", "Noto Sans", sans-serif; }
button { margin: 0; padding: 0; border: 0; background: none; color: inherit; font: inherit; }
svg { display: block; flex: none; overflow: visible; }
h1, h2, ul { margin: 0; padding: 0; font-weight: 400; }

.titlebar { display: grid; grid-template-columns: 1fr auto 1fr; align-items: center; flex: none; height: 31px; padding-right: 9px; background: #3b3a39; color: #fff; }
.titlebar h1 { padding-right: 125px; font-size: 11px; }
.quick { display: flex; gap: 14px; }
.quick button:first-child { width: 10px; }
.window { display: flex; justify-content: flex-end; align-items: center; gap: 32px; }
.signin { display: flex; align-items: center; gap: 10px; }

.ribbon { position: relative; z-index: 2; flex: none; height: 126px; background: #fafafa; box-shadow: 0 1px 3px rgba(0, 0, 0, .2); }
.tabs { display: flex; align-items: center; gap: 32px; height: 36px; font-size: 13px; }
.tabs > button { position: relative; height: 36px; padding-bottom: 4px; white-space: nowrap; }
.tabs > button:first-child { margin-right: 7px; }
.tabs > button.active { font-weight: 600; }
.tabs > button.active::after { content: ""; position: absolute; left: 0; right: 0; bottom: 5px; height: 3px; background: #117865; }
.tabs > button.share { display: flex; align-items: center; gap: 6px; height: 24px; margin: 0 0 4px auto; padding: 0 6px; border-radius: 4px; background: #117865; color: #fff; font-size: 11px; font-weight: 600; }
.groups { display: flex; height: 88px; }
.group { display: flex; flex-direction: column; flex: none; border-right: 1px solid #d2d0ce; }
.group-body { display: flex; justify-content: center; flex: 1; padding-top: 6px; }
.group-label { height: 12px; margin-bottom: -2px; font-size: 9px; line-height: 12px; text-align: center; white-space: nowrap; }
.rb { display: flex; flex-direction: column; align-items: center; flex: none; }
.rb .ico { margin-bottom: 2px; }
.line { display: flex; align-items: center; height: 16px; white-space: nowrap; }
.caret { margin-left: 4px; }
button:disabled { color: #c0bebc; }
.clipboard { width: 171px; }
.clip-body { display: flex; flex: 1; }
.clipboard .group-label { padding-right: 22px; }
.paste { display: flex; flex-direction: column; align-items: flex-end; width: 24px; padding: 6px 2px 0 0; }
.paste span { margin-top: 2px; padding-right: 2px; }
.clip-list { display: flex; flex-direction: column; padding: 1px 0 0 6px; }
.clip-list button { display: flex; align-items: center; gap: 4px; height: 24px; white-space: nowrap; }
.collapse { margin: auto 0 4px auto; }

.main { display: flex; flex: 1; min-height: 0; border-bottom: 1px solid #dcdad8; }
.rail { display: flex; flex-direction: column; flex: none; gap: 24px; width: 18px; padding-top: 10px; border-right: 1px solid #dcdad8; }
.rail button { height: 17px; }
.workspace { display: flex; flex-direction: column; flex: 1; min-width: 0; }
.upper { display: flex; flex: 1; min-height: 0; background: #fff; }
.canvas { display: flex; flex: 1; min-width: 0; padding: 0 84px 6px; }
.page { display: grid; grid-template-columns: 648fr 458fr; gap: 8px; flex: 1; min-width: 0; padding: 0 5px 5px; border: 2px dotted #555; border-top: 0; }
.left-col { display: flex; flex-direction: column; min-width: 0; padding-top: 5px; }
.table-wrap { display: flex; justify-content: space-between; padding-right: 1px; }
.thumb { width: 7px; height: 30px; margin-top: 1px; border-radius: 4px; background: #b0aeac; }
table { width: 623px; border: 1px solid #605e5c; border-top: 2px solid #7a7a7a; border-collapse: separate; border-spacing: 0; table-layout: fixed; color: #000; }
.c1 { width: 181px; } .c2 { width: 89px; } .c3 { width: 180px; }
th { position: relative; height: 57px; padding: 1px 20px 0; border-bottom: 2px solid #444; color: #8a3293; font-size: 16px; font-weight: 400; line-height: 22px; vertical-align: top; }
th:nth-child(-n+2) { padding-left: 0; padding-right: 0; }
.sort { position: absolute; left: 4px; bottom: 3px; border: 6px solid transparent; border-top: 0; border-bottom: 5px solid #8a3293; }
td { padding: 0 4px; }
tbody td { position: relative; height: 22px; border-bottom: 5px solid #8a3293; }
tbody td:nth-child(2)::after, tbody td:nth-child(3)::after { content: ""; position: absolute; right: 0; top: 0; bottom: -5px; width: 1px; background: rgba(255, 255, 255, .5); }
tbody td div { height: 17px; overflow: hidden; line-height: 17px; }
tbody tr:nth-child(even) { background: #ebebeb; color: #2c2c2c; }
td:first-child { text-align: center; }
td:nth-child(3) { text-align: right; }
tbody tr:last-child td { height: 14px; border-bottom: 0; }
tbody tr:last-child td div { height: 14px; }
tfoot td { height: 18px; border-top: 2px solid #444; font-weight: 600; line-height: 16px; }
.pie-title { height: 43px; padding-right: 32px; color: #8a3293; font: 400 28px/43px Roboto, sans-serif; text-align: center; white-space: nowrap; }
.pie { display: flex; }
.pie text { fill: #605e5c; font-size: 10px; }
.legend { padding: 60px 0 0 11px; color: #605e5c; list-style: none; white-space: nowrap; }
.legend li { display: flex; align-items: center; gap: 3px; height: 22px; }
.legend .legend-title { height: 16px; font-weight: 600; }
.legend i { width: 9px; height: 9px; border-radius: 50%; }
.pink { background: #e044a7; }
.violet { background: #6b007b; }
.right-col { display: flex; flex-direction: column; min-width: 0; }
.map-title { height: 34px; color: #e044a7; font: 400 24px/32px Roboto, sans-serif; text-align: center; }
.map { position: relative; flex: 1; min-height: 0; overflow: hidden; }
.map > svg { position: absolute; width: 100%; height: 100%; overflow: hidden; }
.map-labels text { fill: #fff; stroke: rgba(30, 40, 30, .5); stroke-width: 4px; paint-order: stroke; font: 700 30px "Open Sans", sans-serif; }
.ocean text { fill: #a8c3d1; font: 600 34px "Open Sans", sans-serif; }
.map-foot { position: absolute; left: 4px; right: 22px; bottom: 5px; display: flex; align-items: center; height: 12px; color: #333; font: 8px/12px "Liberation Sans", sans-serif; white-space: nowrap; }
.bing { margin-left: 2px; color: #fff; }
.credit { margin-left: auto; text-shadow: 0 0 1px #fff, 0 0 2px #fff; }
.credit a { color: #33508c; }
.credit a + a { margin-left: 6px; }

.pane { position: relative; display: flex; flex-direction: column; align-items: center; flex: none; gap: 14px; padding-top: 13px; color: #323130; font-size: 15px; font-weight: 600; line-height: 20px; }
.pane span { writing-mode: vertical-rl; }
.filters { width: 33px; border-left: 1px solid #a5a3a1; background: #fff; gap: 15px; }
.filters span { margin-top: -7px; }
.visuals { width: 35px; border-left: 1px solid #dcdad8; }
.data { width: 28px; border-left: 1px solid #dcdad8; padding-left: 7px; }
.tip { position: absolute; z-index: 3; right: -14px; top: -37px; width: 63px; height: 31px; border-radius: 3px; background: #fff; box-shadow: 0 3px 9px rgba(0, 0, 0, .25); color: #201f1e; font-size: 11px; font-weight: 400; line-height: 31px; text-align: center; }
.tip::after { content: ""; position: absolute; left: 21px; top: 31px; border: 10px solid transparent; border-bottom: 0; border-top-color: #fff; }
.visuals { z-index: 3; }

.pagebar { display: flex; flex: none; height: 35px; }
.view { display: flex; align-items: center; justify-content: center; width: 24px; margin-left: 10px; padding-bottom: 4px; }
.view + .view { margin-left: 20px; }
.view.on { height: 31px; padding-bottom: 0; border-bottom: 3px solid #117865; }
.step { width: 5px; }
.view + .step { margin-left: 15px; }
.step + .step { margin-left: 17px; }
.pagebar .tab { width: 86px; margin-left: 7px; padding-top: 3px; border-left: 1px solid #a19f9d; border-bottom: 4px solid #117865; background: #fff; font-weight: 600; }
.add { display: flex; align-items: center; justify-content: center; width: 39px; background: #117865; }
.status { display: flex; justify-content: space-between; flex: none; height: 16px; overflow: hidden; color: #605e5c; line-height: 24px; }
.pageno { margin-left: -22px; font-size: 12px; }
.zoom { display: flex; align-items: center; height: 24px; padding-right: 11px; }
.zoom input { appearance: none; width: 100px; height: 12px; margin: 0 6px 0 4px; background: linear-gradient(#605e5c, #605e5c) center / 100% 1px no-repeat, linear-gradient(#605e5c, #605e5c) 50% 50% / 1px 5px no-repeat; }
.zoom input::-webkit-slider-thumb { appearance: none; width: 4px; height: 11px; background: #605e5c; }
.pct { width: 24px; margin: 0 18px 0 13px; }
</style>
